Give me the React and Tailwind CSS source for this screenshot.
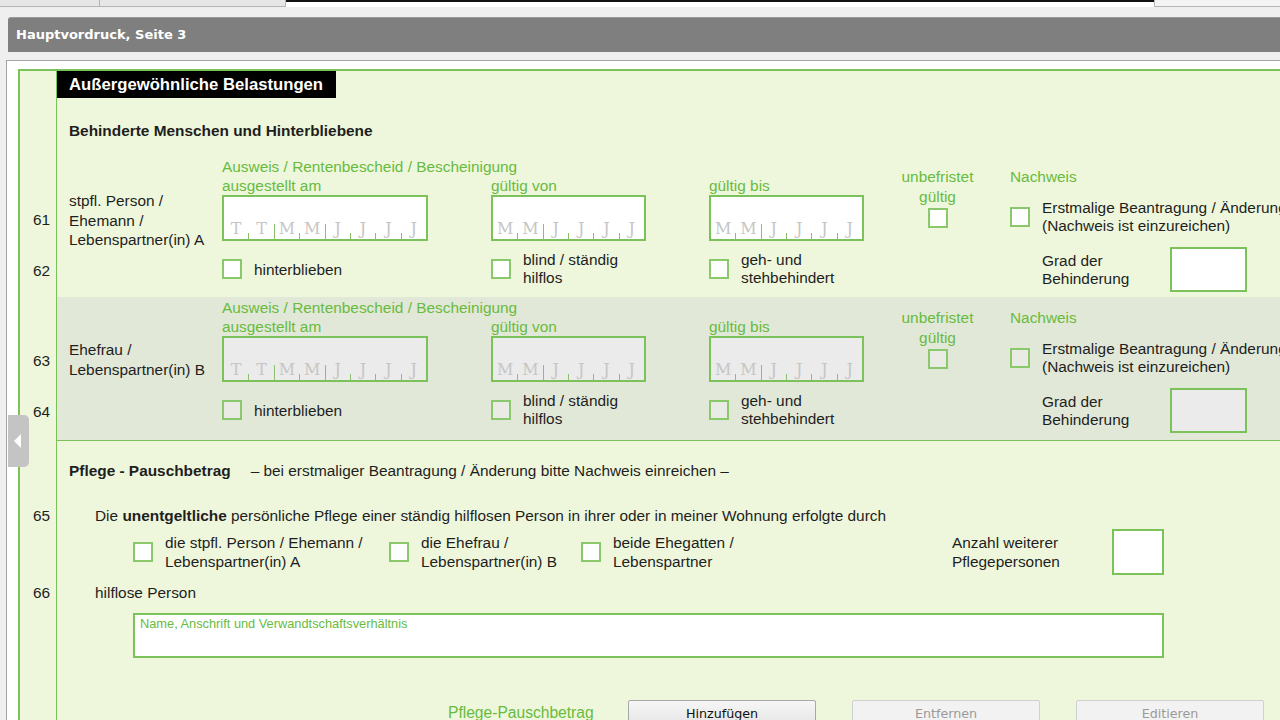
import React from 'react';

function Check({ gray }) {
  return (
    <div
      className={`w-[20px] h-[20px] shrink-0 border-2 border-[#8ac96b] ${gray ? 'bg-[#e9ebe4]' : 'bg-white'}`}
    />
  );
}

function DateBox({ pattern, wide, gray }) {
  const items = [];
  pattern.split('|').forEach((g, gi) => {
    if (gi > 0) items.push(<div key={'g' + gi} className="w-px h-[15px] bg-[#8cc06f] shrink-0" />);
    g.split('').forEach((ch, ci) => {
      if (ci > 0) items.push(<div key={'s' + gi + ci} className="w-px h-[6px] bg-[#8cc06f] shrink-0" />);
      items.push(
        <div
          key={'c' + gi + ci}
          className="flex-1 text-center font-['DejaVu_Serif',serif] text-[16px] leading-[18px] text-[#c6c6c6] pb-[1px]"
        >
          {ch}
        </div>
      );
    });
  });
  return (
    <div
      className={`${wide ? 'w-[206px]' : 'w-[155px]'} h-[46px] border-2 border-[#7cc25b] flex items-end ${gray ? 'bg-[#ebebeb]' : 'bg-white'}`}
    >
      {items}
    </div>
  );
}

function PersonRow({ gray, label, labelPt }) {
  const green = 'text-[#68bb3e]';
  return (
    <div className={`flex ${gray ? 'bg-[#e2e8d7] h-[143px]' : 'h-[141px]'}`}>
      <div className={`w-[165px] shrink-0 pl-[12px] leading-[19.5px] whitespace-nowrap ${labelPt}`}>
        {label.map((l) => (
          <div key={l}>{l}</div>
        ))}
      </div>
      <div className="w-[269px] shrink-0 flex flex-col">
        <div className={`pt-[1px] leading-[19px] whitespace-nowrap ${green}`}>Ausweis / Rentenbescheid / Bescheinigung</div>
        <div className={`leading-[19px] ${green}`}>ausgestellt am</div>
        <DateBox pattern="TT|MM|JJJJ" wide gray={gray} />
        <div className="mt-[10px] h-[36px] flex items-center gap-[12px]">
          <Check gray={gray} />
          <span className="mt-[2px]">hinterblieben</span>
        </div>
      </div>
      <div className="w-[218px] shrink-0 flex flex-col pt-[20px]">
        <div className={`leading-[19px] ${green}`}>gültig von</div>
        <DateBox pattern="MM|JJJJ" gray={gray} />
        <div className="mt-[10px] h-[36px] flex items-center gap-[12px]">
          <Check gray={gray} />
          <div className="leading-[18px]">
            <div>blind / ständig</div>
            <div>hilflos</div>
          </div>
        </div>
      </div>
      <div className="w-[186px] shrink-0 flex flex-col pt-[20px]">
        <div className={`leading-[19px] ${green}`}>gültig bis</div>
        <DateBox pattern="MM|JJJJ" gray={gray} />
        <div className="mt-[10px] h-[36px] flex items-center gap-[12px]">
          <Check gray={gray} />
          <div className="leading-[18px]">
            <div>geh- und</div>
            <div>stehbehindert</div>
          </div>
        </div>
      </div>
      <div className={`w-[85px] shrink-0 flex flex-col items-center pt-[11px] leading-[20px] ${green}`}>
        <div>unbefristet</div>
        <div>gültig</div>
        <div className="mt-[1px]">
          <Check gray={gray} />
        </div>
      </div>
      <div className="ml-[30px] flex flex-col pt-[11px] whitespace-nowrap">
        <div className={`leading-[20px] ${green}`}>Nachweis</div>
        <div className="mt-[12px] flex items-center gap-[12px]">
          <Check gray={gray} />
          <div className="leading-[18px]">
            <div>Erstmalige Beantragung / Änderung</div>
            <div>(Nachweis ist einzureichen)</div>
          </div>
        </div>
        <div className="mt-[12px] ml-[32px] flex items-center">
          <div className="w-[128px] leading-[18px]">
            <div>Grad der</div>
            <div>Behinderung</div>
          </div>
          <div className={`w-[77px] h-[45px] border-2 border-[#7cc25b] ${gray ? 'bg-[#ebebeb]' : 'bg-white'}`} />
        </div>
      </div>
    </div>
  );
}

export default function App() {
  return (
    <div className="w-[1280px] h-[720px] overflow-hidden bg-[#efefef] relative font-['Liberation_Sans',Arial,sans-serif] text-[15.4px] text-[#1e1e1e]">
      {/* top tab strip */}
      <div className="h-[7px] flex">
        <div className="w-[100px] bg-[#e6e6e6] border-r border-b border-[#b5b5b5]" />
        <div className="w-[186px] bg-[#e6e6e6] border-r border-b border-[#b5b5b5]" />
        <div className="flex-1 bg-white border-t-2 border-[#111]" />
        <div className="w-[126px] bg-[#f3f3f3] border-l border-b border-[#b5b5b5]" />
      </div>
      <div className="h-[10px]" />
      {/* header bar */}
      <div className="ml-[8px] h-[35px] bg-[#7f7f7f] rounded-tl-[3px] border-t border-[#999] flex items-center pl-[8px] text-white font-bold font-['DejaVu_Sans',sans-serif] text-[13px]">
        Hauptvordruck, Seite 3
      </div>
      <div className="h-[8px]" />
      {/* panel */}
      <div className="ml-[6px] border-t border-l border-[#a3a3a3] bg-white pt-[8px] pl-[11px]">
        <div className="border-t-2 border-l-2 border-[#7cc25b] bg-[#eef7dc] flex h-[700px]">
          {/* number column */}
          <div className="w-[37px] shrink-0 border-r border-[#7cc25b] flex flex-col items-end pr-[6px] leading-[20px]">
            <div className="mt-[139px]">61</div>
            <div className="mt-[31px]">62</div>
            <div className="mt-[70px]">63</div>
            <div className="mt-[31px]">64</div>
            <div className="mt-[84px]">65</div>
            <div className="mt-[57px]">66</div>
          </div>
          {/* content */}
          <div className="flex-1 flex flex-col">
            <div className="w-[279px] h-[27px] bg-black text-white font-bold text-[16.7px] flex items-center pl-[12px]">
              Außergewöhnliche Belastungen
            </div>
            <div className="mt-[23px] pl-[12px] leading-[20px] font-bold">
              Behinderte Menschen und Hinterbliebene
            </div>
            <div className="mt-[15px]">
              <PersonRow label={['stpfl. Person /', 'Ehemann /', 'Lebenspartner(in) A']} labelPt="pt-[35px]" />
            </div>
            <PersonRow gray label={['Ehefrau /', 'Lebenspartner(in) B']} labelPt="pt-[43px]" />
            {/* Pflege section */}
            <div className="border-t border-[#7cc25b] flex flex-col">
              <div className="pt-[20px] pl-[12px] leading-[20px] flex whitespace-nowrap">
                <span className="font-bold">Pflege - Pauschbetrag</span>
                <span className="ml-[20px]">– bei erstmaliger Beantragung / Änderung bitte Nachweis einreichen –</span>
              </div>
              <div className="mt-[25px] pl-[38px] leading-[20px] whitespace-nowrap">
                Die <span className="font-bold">unentgeltliche</span> persönliche Pflege einer ständig hilflosen Person in ihrer oder in meiner Wohnung erfolgte durch
              </div>
              <div className="mt-[3px] pl-[76px] h-[46px] flex items-center leading-[19px] whitespace-nowrap">
                <div className="w-[256px] flex items-center gap-[12px]">
                  <Check />
                  <div>
                    <div>die stpfl. Person / Ehemann /</div>
                    <div>Lebenspartner(in) A</div>
                  </div>
                </div>
                <div className="w-[192px] flex items-center gap-[12px]">
                  <Check />
                  <div>
                    <div>die Ehefrau /</div>
                    <div>Lebenspartner(in) B</div>
                  </div>
                </div>
                <div className="w-[371px] flex items-center gap-[12px]">
                  <Check />
                  <div>
                    <div>beide Ehegatten /</div>
                    <div>Lebenspartner</div>
                  </div>
                </div>
                <div className="w-[160px]">
                  <div>Anzahl weiterer</div>
                  <div>Pflegepersonen</div>
                </div>
                <div className="w-[52px] h-[46px] border-2 border-[#7cc25b] bg-white" />
              </div>
              <div className="mt-[8px] pl-[38px] leading-[20px]">hilflose Person</div>
              <div className="mt-[10px] ml-[76px] w-[1031px] h-[45px] border-2 border-[#7cc25b] bg-white pl-[5px] pt-[1px] leading-[14px]">
                <span className="text-[12.8px] text-[#68bb3e]">Name, Anschrift und Verwandtschaftsverhältnis</span>
              </div>
              <div className="mt-[42px] pl-[391px] flex items-start">
                <div className="w-[180px] pt-[3px] text-[15.6px] leading-[20px] text-[#68bb3e]">Pflege-Pauschbetrag</div>
                <div className="flex gap-[36px] font-['DejaVu_Sans',sans-serif] text-[12.7px]">
                  <div className="w-[188px] h-[28px] border border-[#a8a8a8] rounded-[2px] bg-gradient-to-b from-[#f6f6f6] to-[#e4e4e4] flex justify-center pt-[3px] text-[#111]">
                    Hinzufügen
                  </div>
                  <div className="w-[188px] h-[28px] border border-[#d0d0d0] rounded-[2px] bg-[#f2f2f2] flex justify-center pt-[3px] text-[#9a9a9a]">
                    Entfernen
                  </div>
                  <div className="w-[188px] h-[28px] border border-[#d0d0d0] rounded-[2px] bg-[#f2f2f2] flex justify-center pt-[3px] text-[#9a9a9a]">
                    Editieren
                  </div>
                </div>
              </div>
            </div>
          </div>
        </div>
      </div>
      {/* collapse tab */}
      <div className="absolute left-[8px] top-[415px] w-[21px] h-[52px] bg-[#c4c4c4] rounded-r-[5px] flex items-center pl-[6px]">
        <div className="w-0 h-0 border-y-[7px] border-y-transparent border-r-[7px] border-r-white" />
      </div>
    </div>
  );
}
